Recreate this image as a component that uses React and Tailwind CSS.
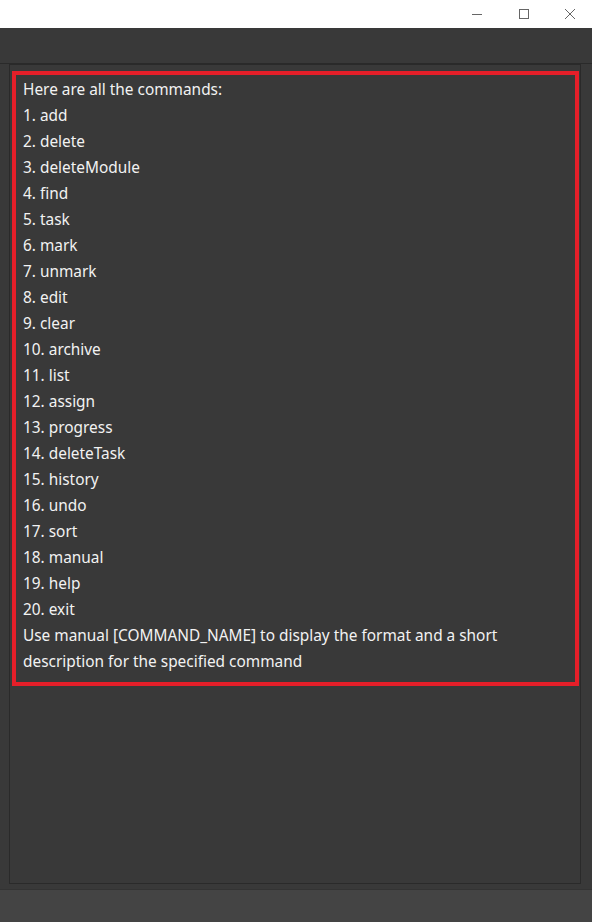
import React from 'react';

const commands = [
  'add', 'delete', 'deleteModule', 'find', 'task', 'mark', 'unmark', 'edit', 'clear', 'archive',
  'list', 'assign', 'progress', 'deleteTask', 'history', 'undo', 'sort', 'manual', 'help', 'exit',
];

function TitleBar() {
  return (
    <div className="h-[28px] bg-white flex justify-end items-center shrink-0">
      <svg width="12" height="12" viewBox="0 0 12 12" className="mr-[35px]">
        <line x1="1" y1="6.5" x2="11" y2="6.5" stroke="#666" strokeWidth="1" />
      </svg>
      <svg width="12" height="12" viewBox="0 0 12 12" className="mr-[34px]">
        <rect x="1.5" y="1.5" width="9" height="9" fill="none" stroke="#666" strokeWidth="1" />
      </svg>
      <svg width="12" height="12" viewBox="0 0 12 12" className="mr-[16px]">
        <path d="M1 1 L11 11 M11 1 L1 11" stroke="#666" strokeWidth="1" />
      </svg>
    </div>
  );
}

export default function App() {
  return (
    <div
      className="w-[592px] h-[922px] flex flex-col bg-[#393939] text-[#f2f2f2] overflow-hidden"
      style={{ fontFamily: '"Noto Sans", "Open Sans", sans-serif' }}
    >
      <TitleBar />

      {/* empty menu strip */}
      <div className="h-[36px] shrink-0 border-b border-[#2a2a2a]" />

      <div className="flex-1 px-[9px] pr-[11px] pb-[5px] flex flex-col">
        <div className="flex-1 border border-[#2a2a2a] pl-[2px] pr-[1px] pt-[6px]">
          <div className="border-4 border-[#e51f29] pl-[7px] pt-[2px] pb-[7px] text-[15.4px] leading-[26px]">
            <div>Here are all the commands:</div>
            {commands.map((c, i) => (
              <div key={c}>{i + 1}. {c}</div>
            ))}
            <div>Use manual [COMMAND_NAME] to display the format and a short description for the specified command</div>
          </div>
        </div>
      </div>

      {/* status strip */}
      <div className="h-[33px] shrink-0 bg-[#444444] border-t border-[#333333]" />
    </div>
  );
}
